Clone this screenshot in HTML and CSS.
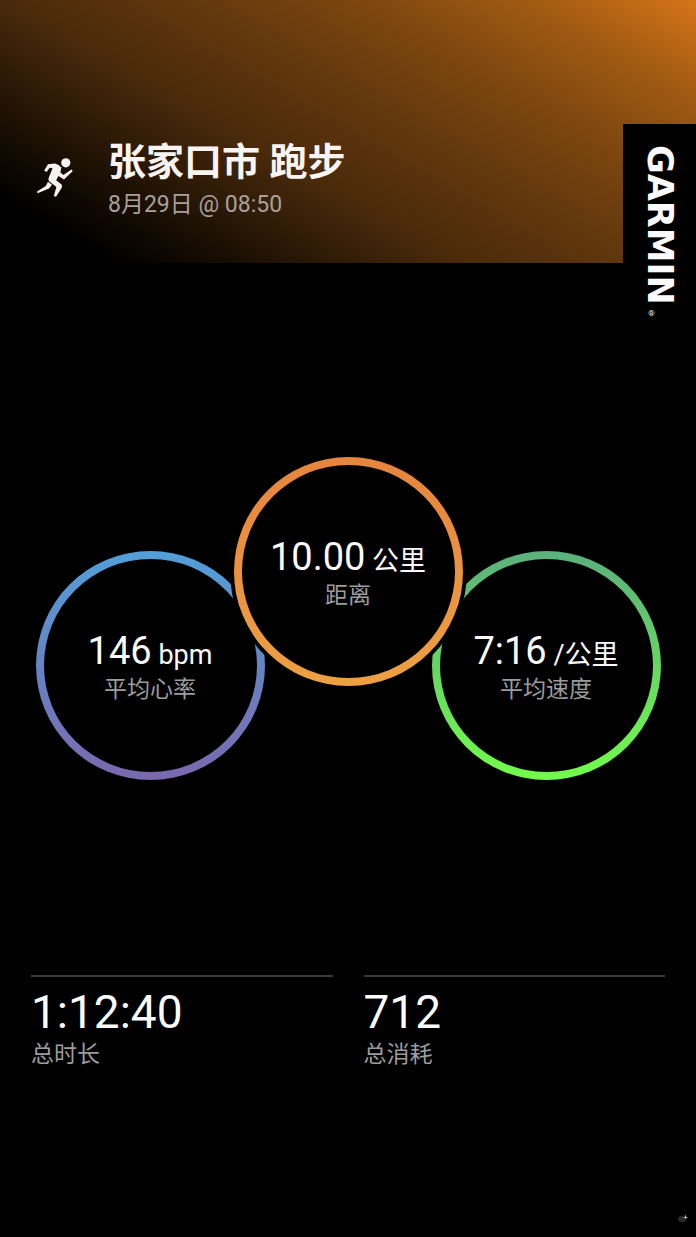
FILE: index.html
```html
<!DOCTYPE html>
<html lang="zh-CN">
	<head>
		<meta charset="utf-8">
		<meta name="viewport" content="width=device-width, initial-scale=1">
		<title>张家口市 跑步</title>
		<link rel="stylesheet" href="styles.css">
	</head>
	<body>
		<main class="share">
			<header class="header">
				<svg class="run-icon" viewBox="0 0 40 44" aria-hidden="true">
					<circle cx="30.8" cy="7.8" r="4.6" />
					<path d="M13 9.2 L20 8.4 Q24 9.4 26.4 12.6 L25.4 17.4 L28.4 20 L36.4 14.6 L37.8 16 L29 24.6 L23.4 21 L21.2 25.2 L26.8 29.8 Q27.4 31.2 26.6 33 L21 41.8 L18.8 41 L21.4 32 L14.4 26.4 Q12.8 24.6 13.8 22.4 L17.6 13.2 L14.6 12.8 L11.6 17 L9.2 15.6 Z" />
					<path d="M13 26.8 L17 29.8 L14 33.6 L2.6 38.2 L2 36.4 L10.8 31 Z" />
				</svg>
				<div class="activity">
					<h1 class="title">张家口市 跑步</h1>
					<p class="label">8月29日 @ 08:50</p>
				</div>
				<div class="brand">
					<span class="brand-name">GARMIN</span><span class="brand-reg">®</span>
				</div>
			</header>

			<section class="rings">
				<div class="ring ring-heart">
					<p class="value">146<span class="unit"> bpm</span></p>
					<p class="label">平均心率</p>
				</div>
				<div class="ring ring-distance">
					<p class="value">10.00<span class="unit"> 公里</span></p>
					<p class="label">距离</p>
				</div>
				<div class="ring ring-pace">
					<p class="value">7:16<span class="unit"> /公里</span></p>
					<p class="label">平均速度</p>
				</div>
			</section>

			<section class="totals">
				<div class="total">
					<p class="total-value">1:12:40</p>
					<p class="label">总时长</p>
				</div>
				<div class="total">
					<p class="total-value">712</p>
					<p class="label">总消耗</p>
				</div>
			</section>

			<footer class="footer">
				<svg class="spark" viewBox="0 0 12 16" aria-hidden="true">
					<ellipse class="spark-glow" cx="6" cy="10" rx="4" ry="3" />
					<path d="M7 8.6 L9 8.2 L9.6 5 L10.2 8.2 L12 8.6 L10 9.6 Z" />
				</svg>
			</footer>
		</main>
	</body>
</html>
```
FILE: styles.css
```css
* {
	box-sizing: border-box;
	margin: 0;
	padding: 0;
}

body {
	background: #000;
	color: #fafafa;
	font-family: Roboto, "Noto Sans CJK SC", sans-serif;
}

.share {
	display: flex;
	flex-direction: column;
	min-height: 100vh;
}

/* header */
.header {
	position: relative;
	display: flex;
	align-items: flex-start;
	gap: 33px;
	height: 263px;
	padding: 137px 100px 0 35px;
	background: linear-gradient(30deg, #000 10%, #1c1003 22%, #4a2a0b 40%, #60360d 54%, #7c460f 70%, #a05a12 85%, #d57518 100%);
}

.run-icon {
	flex: none;
	width: 40px;
	height: 44px;
	margin-top: 18px;
	fill: #f5f3f1;
}

.title {
	margin-bottom: 2px;
	font-size: 38px;
	line-height: 50px;
	font-weight: bold;
	color: #f8f4f1;
}

.label {
	font-size: 23px;
	line-height: 32px;
	color: #9c9c9c;
}

.activity .label {
	color: #a8a09a;
}

/* logo tab, hangs below the header */
.brand {
	position: absolute;
	top: 124px;
	right: 0;
	display: flex;
	align-items: flex-end;
	width: 73px;
	padding-top: 21px;
	background: #000;
	writing-mode: vertical-rl;
}

.brand-name {
	font-family: "DejaVu Sans", sans-serif;
	font-size: 35px;
	line-height: 73px;
	font-weight: bold;
}

.brand-reg {
	margin-top: 4px;
	font-size: 8px;
	line-height: 56px;
}

/* rings */
.rings {
	display: flex;
	justify-content: center;
	margin-top: 194px;
}

.ring {
	flex: none;
	display: flex;
	flex-direction: column;
	align-items: center;
	width: 229px;
	height: 229px;
	margin-top: 94px;
	padding-top: 72px;
	border: 8px solid transparent;
	border-radius: 50%;
}

.ring-heart {
	background: linear-gradient(#000, #000) padding-box, linear-gradient(#529fd8, #7a68ae) border-box;
}

.ring-distance {
	z-index: 1;
	margin: 0 -31px;
	background: linear-gradient(#000, #000) padding-box, linear-gradient(#e6853e, #eda043) border-box;
	box-shadow: 0 0 0 4px #000;
}

.ring-pace {
	background: linear-gradient(#000, #000) padding-box, linear-gradient(#5bb07c, #72fb4b) border-box;
}

.value {
	font-size: 38px;
	line-height: 40px;
	white-space: nowrap;
}

.unit {
	font-size: 27px;
}

.ring .label {
	line-height: 30px;
}

/* totals */
.totals {
	display: grid;
	grid-template-columns: 1fr 1fr;
	gap: 31px;
	margin-top: 195px;
	padding: 0 31px;
}

.total {
	padding-top: 8px;
	border-top: 2px solid #3b3b3b;
}

.total-value {
	font-size: 46px;
	line-height: 54px;
}

.footer {
	display: flex;
	justify-content: flex-end;
	margin-top: auto;
	padding: 0 8px 12px;
}

.spark {
	width: 12px;
	height: 16px;
	fill: #ddd;
}

.spark-glow {
	fill: #2c2c2c;
}
```
